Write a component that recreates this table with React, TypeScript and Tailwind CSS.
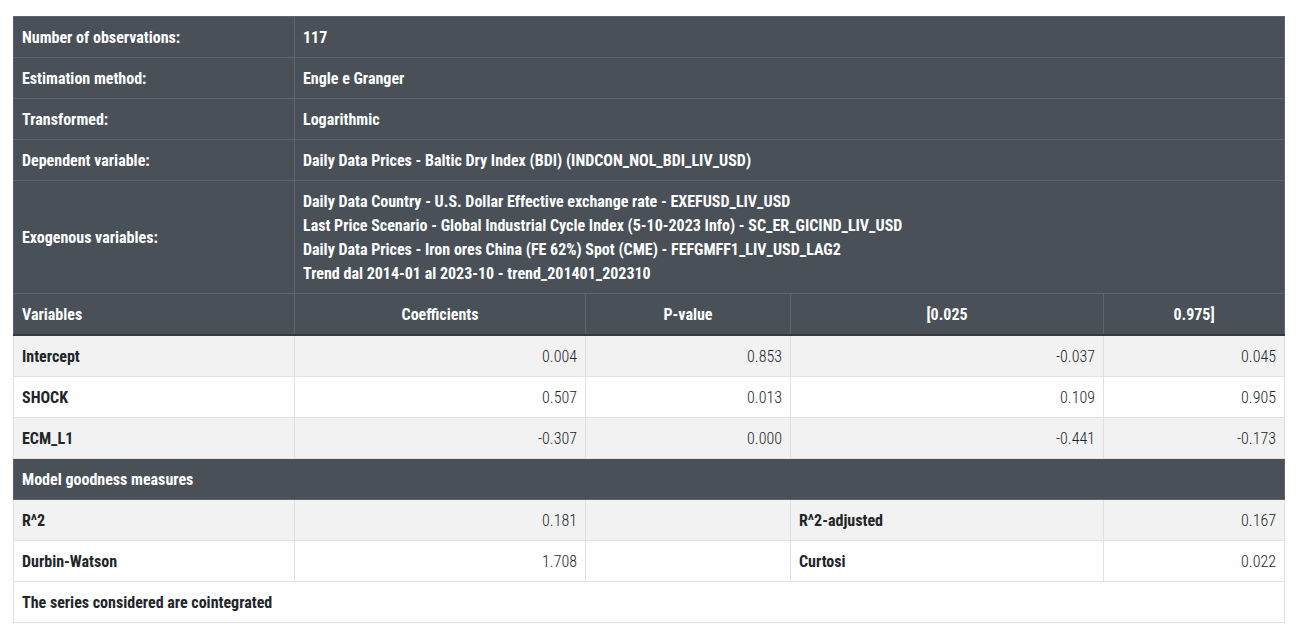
const font = { fontFamily: '"Roboto Condensed", "DejaVu Sans Condensed", Roboto, "Liberation Sans", sans-serif' };

const exogenous = [
  'Daily Data Country - U.S. Dollar Effective exchange rate - EXEFUSD_LIV_USD',
  'Last Price Scenario - Global Industrial Cycle Index (5-10-2023 Info) - SC_ER_GICIND_LIV_USD',
  'Daily Data Prices - Iron ores China (FE 62%) Spot (CME) - FEFGMFF1_LIV_USD_LAG2',
  'Trend dal 2014-01 al 2023-10 - trend_201401_202310',
];

const coefs = [
  ['Intercept', '0.004', '0.853', '-0.037', '0.045'],
  ['SHOCK', '0.507', '0.013', '0.109', '0.905'],
  ['ECM_L1', '-0.307', '0.000', '-0.441', '-0.173'],
];

const info = [
  ['Number of observations:', '117'],
  ['Estimation method:', 'Engle e Granger'],
  ['Transformed:', 'Logarithmic'],
  ['Dependent variable:', 'Daily Data Prices - Baltic Dry Index (BDI) (INDCON_NOL_BDI_LIV_USD)'],
];

const dk = 'border border-[#5d636b] px-2 pt-[9px] pb-[7px] font-bold leading-6';
const lt = 'border border-[#dee2e6] px-2 pt-[9px] pb-[7px] leading-6';
const num = `${lt} text-right font-light`;

export default function App() {
  return (
    <div className="bg-white min-h-screen pt-4 px-[13px] text-[16px] text-[#212529]" style={font}>
      <table className="w-[1271px] table-fixed border-collapse">
        <colgroup>
          <col className="w-[281px]" />
          <col className="w-[291px]" />
          <col className="w-[205px]" />
          <col className="w-[313px]" />
          <col className="w-[181px]" />
        </colgroup>
        <tbody className="bg-[#495057] text-white">
          {info.map(([k, v]) => (
            <tr key={k}>
              <td className={dk}>{k}</td>
              <td className={dk} colSpan={4}>{v}</td>
            </tr>
          ))}
          <tr>
            <td className={dk}>Exogenous variables:</td>
            <td className={dk} colSpan={4}>
              {exogenous.map((e) => (
                <div key={e}>{e}</div>
              ))}
            </td>
          </tr>
          <tr className="border-b-2 border-b-[#343a40]">
            <td className={dk}>Variables</td>
            <td className={`${dk} text-center`}>Coefficients</td>
            <td className={`${dk} text-center`}>P-value</td>
            <td className={`${dk} text-center`}>[0.025</td>
            <td className={`${dk} text-center`}>0.975]</td>
          </tr>
        </tbody>
        <tbody>
          {coefs.map((r, i) => (
            <tr key={r[0]} className={i % 2 === 0 ? 'bg-[#f2f2f2]' : 'bg-white'}>
              <td className={`${lt} font-bold`}>{r[0]}</td>
              {r.slice(1).map((v, j) => (
                <td key={j} className={num}>{v}</td>
              ))}
            </tr>
          ))}
          <tr className="bg-[#495057] text-white">
            <td className={dk} colSpan={5}>Model goodness measures</td>
          </tr>
          <tr className="bg-[#f2f2f2]">
            <td className={`${lt} font-bold`}>R^2</td>
            <td className={num}>0.181</td>
            <td className={lt}></td>
            <td className={`${lt} font-bold`}>R^2-adjusted</td>
            <td className={num}>0.167</td>
          </tr>
          <tr className="bg-white">
            <td className={`${lt} font-bold`}>Durbin-Watson</td>
            <td className={num}>1.708</td>
            <td className={lt}></td>
            <td className={`${lt} font-bold`}>Curtosi</td>
            <td className={num}>0.022</td>
          </tr>
          <tr className="bg-white">
            <td className={`${lt} font-bold`} colSpan={5}>The series considered are cointegrated</td>
          </tr>
        </tbody>
      </table>
    </div>
  );
}
